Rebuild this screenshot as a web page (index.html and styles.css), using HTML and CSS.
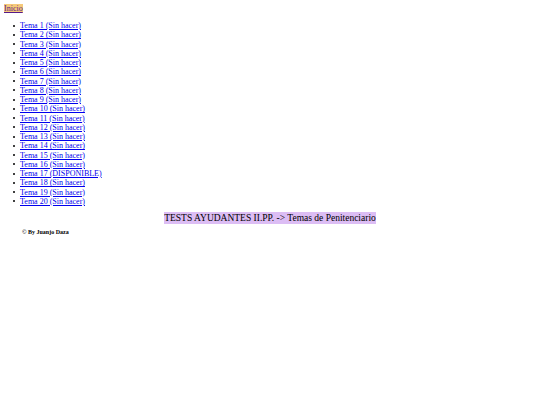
FILE: index.html
```html
<!DOCTYPE html>
<html lang="es">
<head>
<meta charset="utf-8">
<title>Temas de Penitenciario</title>
<link rel="stylesheet" href="styles.css">
</head>
<body>
<a class="home" href="#">Inicio</a>
<ul class="topics">
<li><a href="#">Tema 1 (Sin hacer)</a></li>
<li><a href="#">Tema 2 (Sin hacer)</a></li>
<li><a href="#">Tema 3 (Sin hacer)</a></li>
<li><a href="#">Tema 4 (Sin hacer)</a></li>
<li><a href="#">Tema 5 (Sin hacer)</a></li>
<li><a href="#">Tema 6 (Sin hacer)</a></li>
<li><a href="#">Tema 7 (Sin hacer)</a></li>
<li><a href="#">Tema 8 (Sin hacer)</a></li>
<li><a href="#">Tema 9 (Sin hacer)</a></li>
<li><a href="#">Tema 10 (Sin hacer)</a></li>
<li><a href="#">Tema 11 (Sin hacer)</a></li>
<li><a href="#">Tema 12 (Sin hacer)</a></li>
<li><a href="#">Tema 13 (Sin hacer)</a></li>
<li><a href="#">Tema 14 (Sin hacer)</a></li>
<li><a href="#">Tema 15 (Sin hacer)</a></li>
<li><a href="#">Tema 16 (Sin hacer)</a></li>
<li><a href="#">Tema 17 (DISPONIBLE)</a></li>
<li><a href="#">Tema 18 (Sin hacer)</a></li>
<li><a href="#">Tema 19 (Sin hacer)</a></li>
<li><a href="#">Tema 20 (Sin hacer)</a></li>
</ul>
<div class="title"><span class="title-text">TESTS AYUDANTES II.PP. -&gt; Temas de Penitenciario</span></div>
<p class="credit">© By Juanjo Daza</p>
</body>
</html>
```

FILE: styles.css
```css
html, body {
  background: #ffffff;
}
body {
  margin: 4px;
  font-family: "Liberation Serif", "Times New Roman", serif;
  font-size: 8px;
  color: #000000;
}
a {
  color: #0000ee;
}
.home {
  color: #551a8b;
  background: #f5c97a;
}
.topics {
  margin: 8px 0 7px;
  padding-left: 8.5px;
  list-style: none;
}
.topics li {
  line-height: 9.25px;
}
.topics li::before {
  content: "";
  display: inline-block;
  width: 2px;
  height: 2px;
  border-radius: 50%;
  background: #000000;
  margin-right: 5.5px;
  vertical-align: 1.5px;
}
.title {
  text-align: center;
  font-size: 9.5px;
}
.title-text {
  background: #dcbdf4;
  padding: 1px 0;
}
.credit {
  margin: 5.5px 0 0 18px;
  font-size: 6px;
  font-weight: bold;
}
```
